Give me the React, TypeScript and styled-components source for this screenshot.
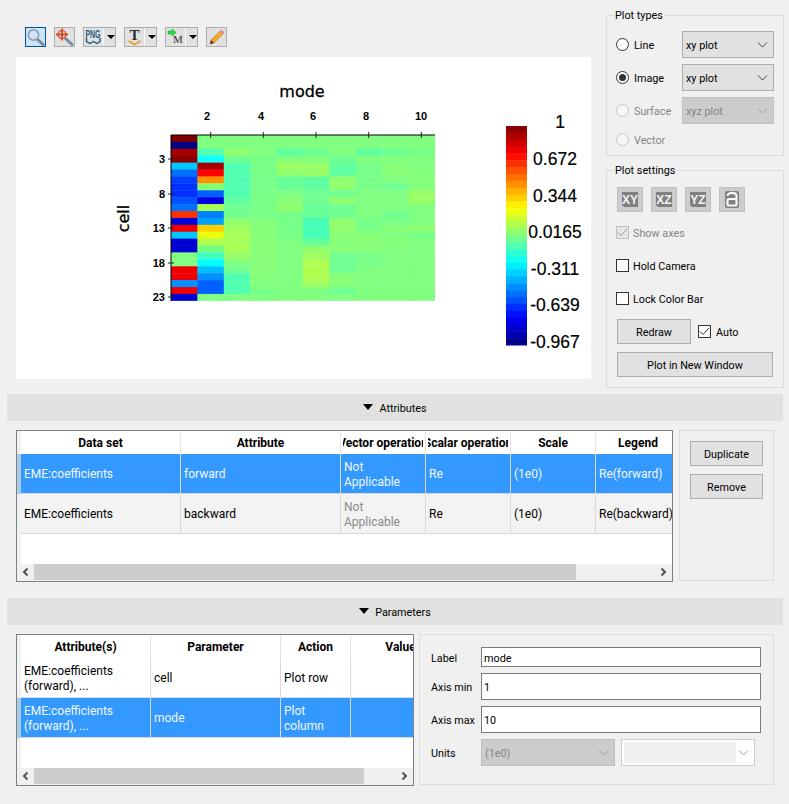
import * as React from 'react'
import styled, { createGlobalStyle } from 'styled-components'

const GlobalStyle = createGlobalStyle`
  html, body {
    margin: 0;
    padding: 0;
    background: #f0f0f0;
  }

  * {
    box-sizing: border-box;
  }
`

const Page = styled.div`
  width: 789px;
  height: 804px;
  overflow: hidden;
  background: #f0f0f0;
  color: #000;
  font-family: Roboto, "Noto Sans", sans-serif;
  font-size: 10.8px;
  display: flex;
  flex-direction: column;
`

const TopArea = styled.div`
  height: 394px;
  display: flex;
`

const PlotColumn = styled.div`
  width: 575px;
  margin-left: 16px;
  display: flex;
  flex-direction: column;
`

const Toolbar = styled.div`
  height: 57px;
  padding: 27px 0 0 9px;
  display: flex;
  align-items: flex-start;
`

const ToolButton = styled.div<{ $active?: boolean; $width?: number; $gap?: number }>`
  width: ${p => p.$width || 21}px;
  height: 20px;
  margin-right: ${p => p.$gap || 8}px;
  background: ${p => (p.$active ? '#cce4f7' : '#e1e1e1')};
  border: 1px solid ${p => (p.$active ? '#005499' : '#adadad')};
  display: flex;
  align-items: center;
`

const ToolIcon = styled.svg`
  width: 19px;
  height: 18px;
  flex: none;
  overflow: visible;
`

const ToolSeparator = styled.div`
  width: 1px;
  height: 18px;
  background: #fff;
`

const ToolArrow = styled.div`
  width: 0;
  height: 0;
  margin-left: 3px;
  border-left: 4px solid transparent;
  border-right: 4px solid transparent;
  border-top: 4px solid #000;
`

const PlotCanvas = styled.div`
  width: 575px;
  height: 322px;
  background: #fff;

  svg {
    display: block;
  }
`

const SideColumn = styled.div`
  width: 178px;
  margin-left: 15px;
  padding-top: 7px;
  display: flex;
  flex-direction: column;
  gap: 6px;
`

const Group = styled.fieldset`
  margin: 0;
  padding: 0;
  border: 1px solid #dcdcdc;
  min-width: 0;
`

const GroupTitle = styled.legend`
  margin-left: 7px;
  padding: 0 1px;
  height: 16px;
  line-height: 18px;
`

const TypeList = styled.div`
  padding: 8px 9px 7px 9px;
  display: flex;
  flex-direction: column;
  gap: 6px;
`

const TypeRow = styled.div<{ $short?: boolean }>`
  height: ${p => (p.$short ? 18 : 27)}px;
  display: flex;
  align-items: center;
`

const Radio = styled.div<{ $checked?: boolean; $disabled?: boolean }>`
  width: 13px;
  height: 13px;
  border-radius: 50%;
  background: ${p => (p.$disabled ? '#f5f5f5' : '#fff')};
  border: 1px solid ${p => (p.$disabled ? '#c4c4c4' : '#333')};
  display: flex;
  align-items: center;
  justify-content: center;

  &::after {
    content: '';
    display: ${p => (p.$checked ? 'block' : 'none')};
    width: 7px;
    height: 7px;
    border-radius: 50%;
    background: #333;
  }
`

const RadioLabel = styled.div<{ $disabled?: boolean }>`
  width: 48px;
  margin-left: 5px;
  padding-top: 2px;
  color: ${p => (p.$disabled ? '#838383' : '#000')};
`

const Combo = styled.div<{ $disabled?: boolean; $width: number; $blank?: boolean }>`
  width: ${p => p.$width}px;
  height: 27px;
  padding: 0 5px 0 3px;
  background: ${p => (p.$blank ? '#fff' : p.$disabled ? '#cccccc' : '#e1e1e1')};
  border: 1px solid ${p => (p.$blank ? '#cccccc' : p.$disabled ? '#bfbfbf' : '#adadad')};
  color: ${p => (p.$disabled ? '#838383' : '#000')};
  display: flex;
  align-items: center;
  justify-content: space-between;
`

const ComboText = styled.span`
  padding-top: 2px;
`

const ComboWell = styled.div`
  width: 112px;
  height: 21px;
  margin-left: -1px;
  background: #f0f0f0;
`

const SettingsBody = styled.div`
  padding: 9px 10px 10px 9px;
  display: flex;
  flex-direction: column;
`

const IconRow = styled.div`
  padding-left: 1px;
  margin-bottom: 4px;
  display: flex;
  gap: 8px;
`

const ViewButton = styled.div`
  width: 26px;
  height: 25px;
  background: #cccccc;
  border: 1px solid #bfbfbf;
  display: flex;
  align-items: center;
  justify-content: center;
`

const CheckRow = styled.div<{ $disabled?: boolean }>`
  height: 33px;
  display: flex;
  align-items: center;
  gap: 4px;
  color: ${p => (p.$disabled ? '#838383' : '#000')};
`

const CheckText = styled.span`
  padding-top: 2px;
`

const Check = styled.div<{ $disabled?: boolean }>`
  width: 13px;
  height: 13px;
  background: ${p => (p.$disabled ? '#e5e5e5' : '#fff')};
  border: 1px solid ${p => (p.$disabled ? '#bfbfbf' : '#333')};
  display: flex;
  align-items: center;
  justify-content: center;
`

const RedrawRow = styled.div`
  margin: 4px 0 8px 1px;
  display: flex;
  align-items: center;
  gap: 7px;
`

const AutoLabel = styled.div`
  display: flex;
  align-items: center;
  gap: 5px;
`

const PushButton = styled.div<{ $width: number }>`
  width: ${p => p.$width}px;
  height: 25px;
  padding-top: 2px;
  background: #e1e1e1;
  border: 1px solid #adadad;
  display: flex;
  align-items: center;
  justify-content: center;
  flex: none;
`

const WideButton = styled(PushButton)`
  margin-left: 1px;
`

const SectionBar = styled.div`
  width: 776px;
  height: 27px;
  margin-left: 7px;
  background: #e1e1e1;
  display: flex;
  align-items: center;
  justify-content: center;
  gap: 6px;
  flex: none;
`

const SectionTitle = styled.span`
  padding-top: 2px;
`

const SectionArrow = styled.div`
  width: 0;
  height: 0;
  margin-bottom: 2px;
  border-left: 5px solid transparent;
  border-right: 5px solid transparent;
  border-top: 6px solid #000;
`

const SectionBody = styled.div<{ $height: number }>`
  height: ${p => p.$height}px;
  padding: 9px 0 0 16px;
  display: flex;
  flex: none;
`

const TableFrame = styled.div<{ $width: number }>`
  width: ${p => p.$width}px;
  height: 152px;
  background: #fff;
  border: 1px solid #7c8087;
  font-size: 12px;
  display: flex;
  flex-direction: column;
  flex: none;
`

const TableArea = styled.div`
  flex: 1;
  min-height: 0;
  overflow: hidden;
  display: flex;
`

const RowHeaders = styled.div`
  width: 4px;
  background: #f0f0f0;
  flex: none;
  display: flex;
  flex-direction: column;
`

const RowHeader = styled.div<{ $selected?: boolean; $head?: boolean }>`
  height: ${p => (p.$head ? 23 : 40)}px;
  background: ${p => (p.$selected ? '#a9cce3' : '#f0f0f0')};
`

const TableGrid = styled.div`
  flex: 1;
  min-width: 0;
  overflow: hidden;
`

const GridRow = styled.div<{ $columns: string; $tone?: string; $head?: boolean }>`
  height: ${p => (p.$head ? 23 : 40)}px;
  display: grid;
  grid-template-columns: ${p => p.$columns};
  background: ${p => (p.$tone === 'selected' ? '#3399ff' : p.$tone === 'alt' ? '#f3f3f3' : '#fff')};
  color: ${p => (p.$tone === 'selected' ? '#f2f7ff' : '#000')};
  border-bottom: ${p => (p.$head ? 0 : '1px solid #d9d9d9')};
`

const HeadCell = styled.div`
  padding: 0 2px;
  border-right: 1px solid #e6e6e6;
  display: flex;
  align-items: center;
  min-width: 0;
`

const HeadText = styled.div`
  width: 100%;
  overflow: hidden;
  white-space: nowrap;
  font-weight: 700;
  display: flex;
  justify-content: center;
`

const BodyCell = styled.div<{ $muted?: boolean }>`
  padding: 2px 3px 0;
  border-right: 1px solid #d9d9d9;
  overflow: hidden;
  line-height: 15px;
  color: ${p => (p.$muted ? '#8a8a8a' : 'inherit')};
  display: flex;
  align-items: center;
`

const ScrollBar = styled.div`
  height: 17px;
  padding-bottom: 1px;
  background: #f0f0f0;
  display: flex;
  flex: none;
`

const ScrollEnd = styled.div`
  width: 17px;
  display: flex;
  align-items: center;
  justify-content: center;
  flex: none;
`

const ScrollTrack = styled.div`
  flex: 1;
`

const ScrollThumb = styled.div`
  height: 100%;
  background: #cdcdcd;
`

const ActionPanel = styled.div`
  width: 95px;
  height: 151px;
  margin-left: 6px;
  padding: 10px 0 0 10px;
  border: 1px solid #dcdcdc;
  display: flex;
  flex-direction: column;
  gap: 8px;
`

const FormPanel = styled.div`
  width: 355px;
  height: 151px;
  margin-left: 5px;
  padding: 12px 0 0 11px;
  border: 1px solid #dcdcdc;
  display: flex;
  flex-direction: column;
  gap: 6px;
`

const FormRow = styled.div`
  display: flex;
  align-items: center;
`

const FormLabel = styled.div`
  width: 50px;
  padding-top: 2px;
  flex: none;
`

const TextBox = styled.div<{ $small?: boolean }>`
  width: 280px;
  height: ${p => (p.$small ? 20 : 27)}px;
  padding: 2px 2px 0;
  background: #fff;
  border: 1px solid #7a7a7a;
  display: flex;
  align-items: center;
`

const UnitGap = styled.div`
  width: 6px;
`

const Chevron = ({ color = '#444' }: { color?: string }) => (
  <svg width="11" height="6" viewBox="0 0 11 6">
    <path d="M1 0.5 L5.5 5 L10 0.5" fill="none" stroke={color} strokeWidth="1" />
  </svg>
)

const Tick = ({ color = '#333' }: { color?: string }) => (
  <svg width="11" height="9" viewBox="0 0 11 9">
    <path d="M1 4.5 L4 7.5 L10 1" fill="none" stroke={color} strokeWidth="1" />
  </svg>
)

const ScrollArrow = ({ right }: { right?: boolean }) => (
  <svg width="7" height="8" viewBox="0 0 7 8">
    <path d={right ? 'M1.5 0.5 L5 4 L1.5 7.5' : 'M5.5 0.5 L2 4 L5.5 7.5'} fill="none" stroke="#505050" strokeWidth="2" />
  </svg>
)

const Magnifier = ({ target }: { target?: boolean }) => (
  <ToolIcon viewBox="0 0 19 18">
    <path d="M10.5 10.5 L17 16.5" stroke="#7c8aa0" strokeWidth="3" strokeLinecap="round" />
    {!target && <circle cx="7.5" cy="7" r="5.2" fill="#cfe3f8" stroke="#8e9cb0" strokeWidth="1.6" />}
    {target && <circle cx="7" cy="6.5" r="4" fill="#d8dfe8" stroke="#d9481c" strokeWidth="1.2" />}
    {target && <path d="M7 0.5 V12.5 M1 6.5 H13" stroke="#d9481c" strokeWidth="1.8" />}
  </ToolIcon>
)

const PngIcon = () => (
  <ToolIcon viewBox="0 0 19 18">
    <text x="9" y="10" textAnchor="middle" fontFamily="Liberation Sans, sans-serif" fontSize="11" fontWeight="700" fill="#23597f" textLength="15" lengthAdjust="spacingAndGlyphs">PNG</text>
    <path d="M2.5 10 V13.5 L6 15.5 L9.5 13.5 L13 15.5 L16 13.5 V10" fill="none" stroke="#23597f" strokeWidth="1.4" />
  </ToolIcon>
)

const TextIcon = () => (
  <ToolIcon viewBox="0 0 19 18">
    <text x="9.5" y="12" textAnchor="middle" fontFamily="Liberation Serif, serif" fontSize="15" fontWeight="700" fill="#2a2a2a">T</text>
    <path d="M3.5 13 L9.5 16.5 L15.5 13" fill="none" stroke="#f29a1f" strokeWidth="1.6" />
  </ToolIcon>
)

const MarkerIcon = () => (
  <ToolIcon viewBox="0 0 19 18">
    <path d="M2 3 H6 V1 L10 4.5 L6 8 V6 H2 Z" fill="#22e43a" stroke="#108a20" strokeWidth="0.5" />
    <text x="12" y="15" textAnchor="middle" fontFamily="Liberation Serif, serif" fontSize="11" fill="#333">M</text>
  </ToolIcon>
)

const PencilIcon = () => (
  <ToolIcon viewBox="0 0 19 18">
    <path d="M3 16 L4 12 L13 3 L16 6 L7 15 Z" fill="#f0a92c" stroke="#b77d14" strokeWidth="0.6" />
    <path d="M13 3 L14.5 1.5 L17.5 4.5 L16 6 Z" fill="#e77fb0" />
    <path d="M3 16 L4 12 L7 15 Z" fill="#40382a" />
  </ToolIcon>
)

const ViewIcon = ({ label }: { label: string }) => (
  <svg width="20" height="17" viewBox="0 0 20 17">
    <path d="M2 1 H18 V16 H4 L2 14 Z" fill="#808080" />
    <text x="10" y="13" textAnchor="middle" fontFamily="Liberation Sans, sans-serif" fontSize="12" fontWeight="700" fill="#f2f2f2">{label}</text>
  </svg>
)

const LockIcon = () => (
  <svg width="18" height="19" viewBox="0 0 18 19">
    <rect x="2" y="1" width="14" height="17" rx="2" fill="#808080" />
    <path d="M4.5 6 C4.5 1.8 13.5 1.8 13.5 6 V9" fill="none" stroke="#f6f6f6" strokeWidth="2.2" />
    <rect x="4.5" y="9" width="9" height="6.5" rx="1.5" fill="none" stroke="#f6f6f6" strokeWidth="2.2" />
  </svg>
)

const B = '#80ff80'

// heat map cells, read off the picture: one array per column, 24 rows each
const heatColumns: string[][] = [
  ['#7a0000', '#000080', '#a80000', '#8a0000', '#00c8ff', '#0070ff', '#0040ff', '#0030ff', '#0030ff', '#0050ff', '#0070ff', '#ff3000', '#0000d8', '#f00000', '#00c8ff', '#0000d0', '#0000d0', B, B, '#f00000', '#f00000', '#0090ff', '#f00000', '#0000d0'],
  [B, B, '#50ffb0', '#10ffff', '#a80000', '#ff0000', '#ff9000', '#80ff70', '#0060ff', '#0000e0', '#a8ff50', '#0080ff', '#00a0ff', '#ffd000', '#e8ff10', '#b0ff50', '#70ff80', '#40ffc0', '#00ffff', '#00c0ff', '#0090ff', '#0060ff', '#0060ff', B],
  [B, B, '#90ff70', '#70ff90', '#50ffb0', '#50ffb0', '#50ffb0', '#50ffb0', '#50ffb0', '#60ffa0', '#70ff90', '#70ff90', '#90ff70', '#a0ff60', '#a8ff58', '#a8ff58', '#a8ff58', '#98ff68', B, '#70ff90', '#50ffb0', '#50ffb0', '#50ffb0', B],
  [B, B, B, '#78ff88', '#78ff88', '#78ff88', '#78ff88', '#78ff88', '#78ff88', '#78ff88', '#78ff88', '#78ff88', '#84ff7c', '#88ff78', '#88ff78', '#88ff78', '#88ff78', '#88ff78', '#88ff78', '#88ff78', '#84ff7c', '#84ff7c', '#78ff88', B],
  [B, B, '#60ffa0', B, '#a0ff60', '#90ff70', '#68ff98', '#68ff98', '#80ff80', '#88ff78', '#90ff70', '#78ff88', '#78ff88', '#78ff88', '#78ff88', B, B, B, B, B, B, B, B, B],
  [B, B, '#70ff90', B, '#98ff68', '#98ff68', '#60ffa0', '#60ffa0', '#70ff90', '#70ff90', '#68ff98', '#68ff98', '#48ffb8', '#48ffb8', '#48ffb8', '#68ff98', '#90ff70', '#a0ff60', '#b0ff50', '#b0ff50', '#b0ff50', '#a0ff60', B, B],
  [B, B, B, '#70ff90', '#60ffa0', '#60ffa0', '#90ff70', '#90ff70', '#70ff90', '#90ff70', '#70ff90', '#70ff90', '#90ff70', '#90ff70', '#88ff78', '#88ff78', '#88ff78', '#70ff90', '#70ff90', '#70ff90', '#88ff78', '#88ff78', '#70ff90', B],
  [B, B, '#60ffa0', B, '#78ff88', '#78ff88', '#78ff88', '#78ff88', B, B, B, B, '#78ff88', '#78ff88', '#88ff78', '#88ff78', '#88ff78', '#78ff88', '#78ff88', B, B, B, B, B],
  [B, B, '#70ff90', B, '#88ff78', '#88ff78', '#80ff80', '#70ff90', B, B, B, '#70ff90', '#78ff88', '#88ff78', '#80ff80', '#84ff7c', '#84ff7c', '#80ff80', B, B, B, B, B, B],
  [B, B, '#78ff88', B, '#84ff7c', '#84ff7c', '#84ff7c', '#84ff7c', '#98ff68', '#98ff68', B, B, B, '#8cff74', '#78ff88', B, B, B, B, B, B, B, B, B]
]

const topTicks = [
  { x: 210.7, label: '2', at: 207 },
  { x: 263.3, label: '4', at: 261 },
  { x: 316, label: '6', at: 313 },
  { x: 368.7, label: '8', at: 366 },
  { x: 421.3, label: '10', at: 421 }
]

const leftTicks = [
  { y: 159, label: '3' },
  { y: 194, label: '8' },
  { y: 228, label: '13' },
  { y: 263, label: '18' },
  { y: 297, label: '23' }
]

const barLabels = [
  { y: 122, label: '1' },
  { y: 159, label: '0.672' },
  { y: 196, label: '0.344' },
  { y: 232, label: '0.0165' },
  { y: 269, label: '-0.311' },
  { y: 305, label: '-0.639' },
  { y: 342, label: '-0.967' }
]

function jet(v: number): string {
  const ch = (t: number) => Math.round(255 * Math.max(0, Math.min(1, t)))
  return `rgb(${ch(1.5 - Math.abs(4 * v - 3))},${ch(1.5 - Math.abs(4 * v - 2))},${ch(1.5 - Math.abs(4 * v - 1))})`
}

const BAR_STEPS = 32

const HeatPlot = () => (
  <svg width="575" height="322" viewBox="16 57 575 322">
    {heatColumns.map((col, c) =>
      col.map((color, r) => (
        <rect key={`${c}-${r}`} x={171 + c * 26.4} y={135 + r * 6.91} width={c === 9 ? 26.4 : 26.9} height={r === 23 ? 6.91 : 7.3} fill={color} />
      ))
    )}
    <path d="M171 135 H435 M171 135 V301" stroke="#000" strokeWidth="1" fill="none" />
    {topTicks.map(t => (
      <g key={t.label}>
        <path d={`M${t.x} 132 V138`} stroke="#222" strokeWidth="1" />
        <text x={t.at} y={120} textAnchor="middle" fontFamily="Liberation Sans, sans-serif" fontSize="11" fontWeight="700">{t.label}</text>
      </g>
    ))}
    {leftTicks.map(t => (
      <g key={t.label}>
        <path d={`M168 ${t.y} H174`} stroke="#222" strokeWidth="1" />
        <text x={165} y={t.y + 4} textAnchor="end" fontFamily="Liberation Sans, sans-serif" fontSize="11" fontWeight="700">{t.label}</text>
      </g>
    ))}
    <text x={302} y={97} textAnchor="middle" fontFamily="DejaVu Sans, sans-serif" fontSize="16" stroke="#000" strokeWidth="0.3">mode</text>
    <text transform="translate(129 218.5) rotate(-90)" textAnchor="middle" fontFamily="DejaVu Sans, sans-serif" fontSize="16" stroke="#000" strokeWidth="0.3">cell</text>
    {Array.from({ length: BAR_STEPS }).map((_, i) => (
      <rect key={i} x={506} y={126 + (i * 219) / BAR_STEPS} width={21} height={219 / BAR_STEPS + 0.5} fill={jet(1 - (i + 0.5) / BAR_STEPS)} />
    ))}
    {barLabels.map(t => (
      <text key={t.label} x={t.label === '1' ? 560 : 555} y={t.y + 6} textAnchor="middle" fontFamily="Liberation Sans, sans-serif" fontSize="17.5" stroke="#000" strokeWidth="0.2">{t.label}</text>
    ))}
  </svg>
)

interface CellData {
  text: string
  muted?: boolean
}

interface TableProps {
  width: number
  columns: string
  thumb: number
  heads: string[]
  rows: { tone?: string; cells: CellData[] }[]
}

const DataTable = ({ width, columns, thumb, heads, rows }: TableProps) => (
  <TableFrame $width={width}>
    <TableArea>
      <RowHeaders>
        <RowHeader $head />
        {rows.map((row, i) => (
          <RowHeader key={i} $selected={row.tone === 'selected'} />
        ))}
      </RowHeaders>
      <TableGrid>
        <GridRow $head $columns={columns}>
          {heads.map(h => (
            <HeadCell key={h}><HeadText>{h}</HeadText></HeadCell>
          ))}
        </GridRow>
        {rows.map((row, i) => (
          <GridRow key={i} $columns={columns} $tone={row.tone}>
            {row.cells.map((cell, j) => (
              <BodyCell key={j} $muted={cell.muted}>{cell.text}</BodyCell>
            ))}
          </GridRow>
        ))}
      </TableGrid>
    </TableArea>
    <ScrollBar>
      <ScrollEnd><ScrollArrow /></ScrollEnd>
      <ScrollTrack>
        <ScrollThumb style={{ width: thumb }} />
      </ScrollTrack>
      <ScrollEnd><ScrollArrow right /></ScrollEnd>
    </ScrollBar>
  </TableFrame>
)

const attributeRows = [
  {
    tone: 'selected',
    cells: [{ text: 'EME:coefficients' }, { text: 'forward' }, { text: 'Not Applicable' }, { text: 'Re' }, { text: '(1e0)' }, { text: 'Re(forward)' }]
  },
  {
    tone: 'alt',
    cells: [{ text: 'EME:coefficients' }, { text: 'backward' }, { text: 'Not Applicable', muted: true }, { text: 'Re' }, { text: '(1e0)' }, { text: 'Re(backward)' }]
  }
]

const parameterRows = [
  {
    cells: [{ text: 'EME:coefficients (forward), ...' }, { text: 'cell' }, { text: 'Plot row' }, { text: '' }]
  },
  {
    tone: 'selected',
    cells: [{ text: 'EME:coefficients (forward), ...' }, { text: 'mode' }, { text: 'Plot column' }, { text: '' }]
  }
]

export default function App() {
  return (
    <Page>
      <GlobalStyle />
      <TopArea>
        <PlotColumn>
          <Toolbar>
            <ToolButton $active><Magnifier /></ToolButton>
            <ToolButton><Magnifier target /></ToolButton>
            <ToolButton $width={33}><PngIcon /><ToolSeparator /><ToolArrow /></ToolButton>
            <ToolButton $width={33}><TextIcon /><ToolSeparator /><ToolArrow /></ToolButton>
            <ToolButton $width={33}><MarkerIcon /><ToolSeparator /><ToolArrow /></ToolButton>
            <ToolButton><PencilIcon /></ToolButton>
          </Toolbar>
          <PlotCanvas>
            <HeatPlot />
          </PlotCanvas>
        </PlotColumn>
        <SideColumn>
          <Group>
            <GroupTitle>Plot types</GroupTitle>
            <TypeList>
              <TypeRow>
                <Radio />
                <RadioLabel>Line</RadioLabel>
                <Combo $width={92}><ComboText>xy plot</ComboText><Chevron /></Combo>
              </TypeRow>
              <TypeRow>
                <Radio $checked />
                <RadioLabel>Image</RadioLabel>
                <Combo $width={92}><ComboText>xy plot</ComboText><Chevron /></Combo>
              </TypeRow>
              <TypeRow>
                <Radio $disabled />
                <RadioLabel $disabled>Surface</RadioLabel>
                <Combo $width={92} $disabled><ComboText>xyz plot</ComboText><Chevron color="#a0a0a0" /></Combo>
              </TypeRow>
              <TypeRow $short>
                <Radio $disabled />
                <RadioLabel $disabled>Vector</RadioLabel>
              </TypeRow>
            </TypeList>
          </Group>
          <Group>
            <GroupTitle>Plot settings</GroupTitle>
            <SettingsBody>
              <IconRow>
                <ViewButton><ViewIcon label="XY" /></ViewButton>
                <ViewButton><ViewIcon label="XZ" /></ViewButton>
                <ViewButton><ViewIcon label="YZ" /></ViewButton>
                <ViewButton><LockIcon /></ViewButton>
              </IconRow>
              <CheckRow $disabled>
                <Check $disabled><Tick color="#9a9a9a" /></Check>
                <CheckText>Show axes</CheckText>
              </CheckRow>
              <CheckRow>
                <Check />
                <CheckText>Hold Camera</CheckText>
              </CheckRow>
              <CheckRow>
                <Check />
                <CheckText>Lock Color Bar</CheckText>
              </CheckRow>
              <RedrawRow>
                <PushButton $width={74}>Redraw</PushButton>
                <AutoLabel>
                  <Check><Tick /></Check>
                  <CheckText>Auto</CheckText>
                </AutoLabel>
              </RedrawRow>
              <WideButton $width={156}>Plot in New Window</WideButton>
            </SettingsBody>
          </Group>
        </SideColumn>
      </TopArea>

      <SectionBar><SectionArrow /><SectionTitle>Attributes</SectionTitle></SectionBar>
      <SectionBody $height={177}>
        <DataTable
          width={657}
          columns="160px 160px 85px 85px 85px 85px"
          thumb={542}
          heads={['Data set', 'Attribute', 'Vector operation', 'Scalar operation', 'Scale', 'Legend']}
          rows={attributeRows}
        />
        <ActionPanel>
          <PushButton $width={73}>Duplicate</PushButton>
          <PushButton $width={73}>Remove</PushButton>
        </ActionPanel>
      </SectionBody>

      <SectionBar><SectionArrow /><SectionTitle>Parameters</SectionTitle></SectionBar>
      <SectionBody $height={179}>
        <DataTable
          width={398}
          columns="130px 130px 70px 100px"
          thumb={330}
          heads={['Attribute(s)', 'Parameter', 'Action', 'Value']}
          rows={parameterRows}
        />
        <FormPanel>
          <FormRow>
            <FormLabel>Label</FormLabel>
            <TextBox $small>mode</TextBox>
          </FormRow>
          <FormRow>
            <FormLabel>Axis min</FormLabel>
            <TextBox>1</TextBox>
          </FormRow>
          <FormRow>
            <FormLabel>Axis max</FormLabel>
            <TextBox>10</TextBox>
          </FormRow>
          <FormRow>
            <FormLabel>Units</FormLabel>
            <Combo $width={134} $disabled><ComboText>(1e0)</ComboText><Chevron color="#a0a0a0" /></Combo>
            <UnitGap />
            <Combo $width={134} $blank><ComboWell /><Chevron color="#a0a0a0" /></Combo>
          </FormRow>
        </FormPanel>
      </SectionBody>
    </Page>
  )
}
